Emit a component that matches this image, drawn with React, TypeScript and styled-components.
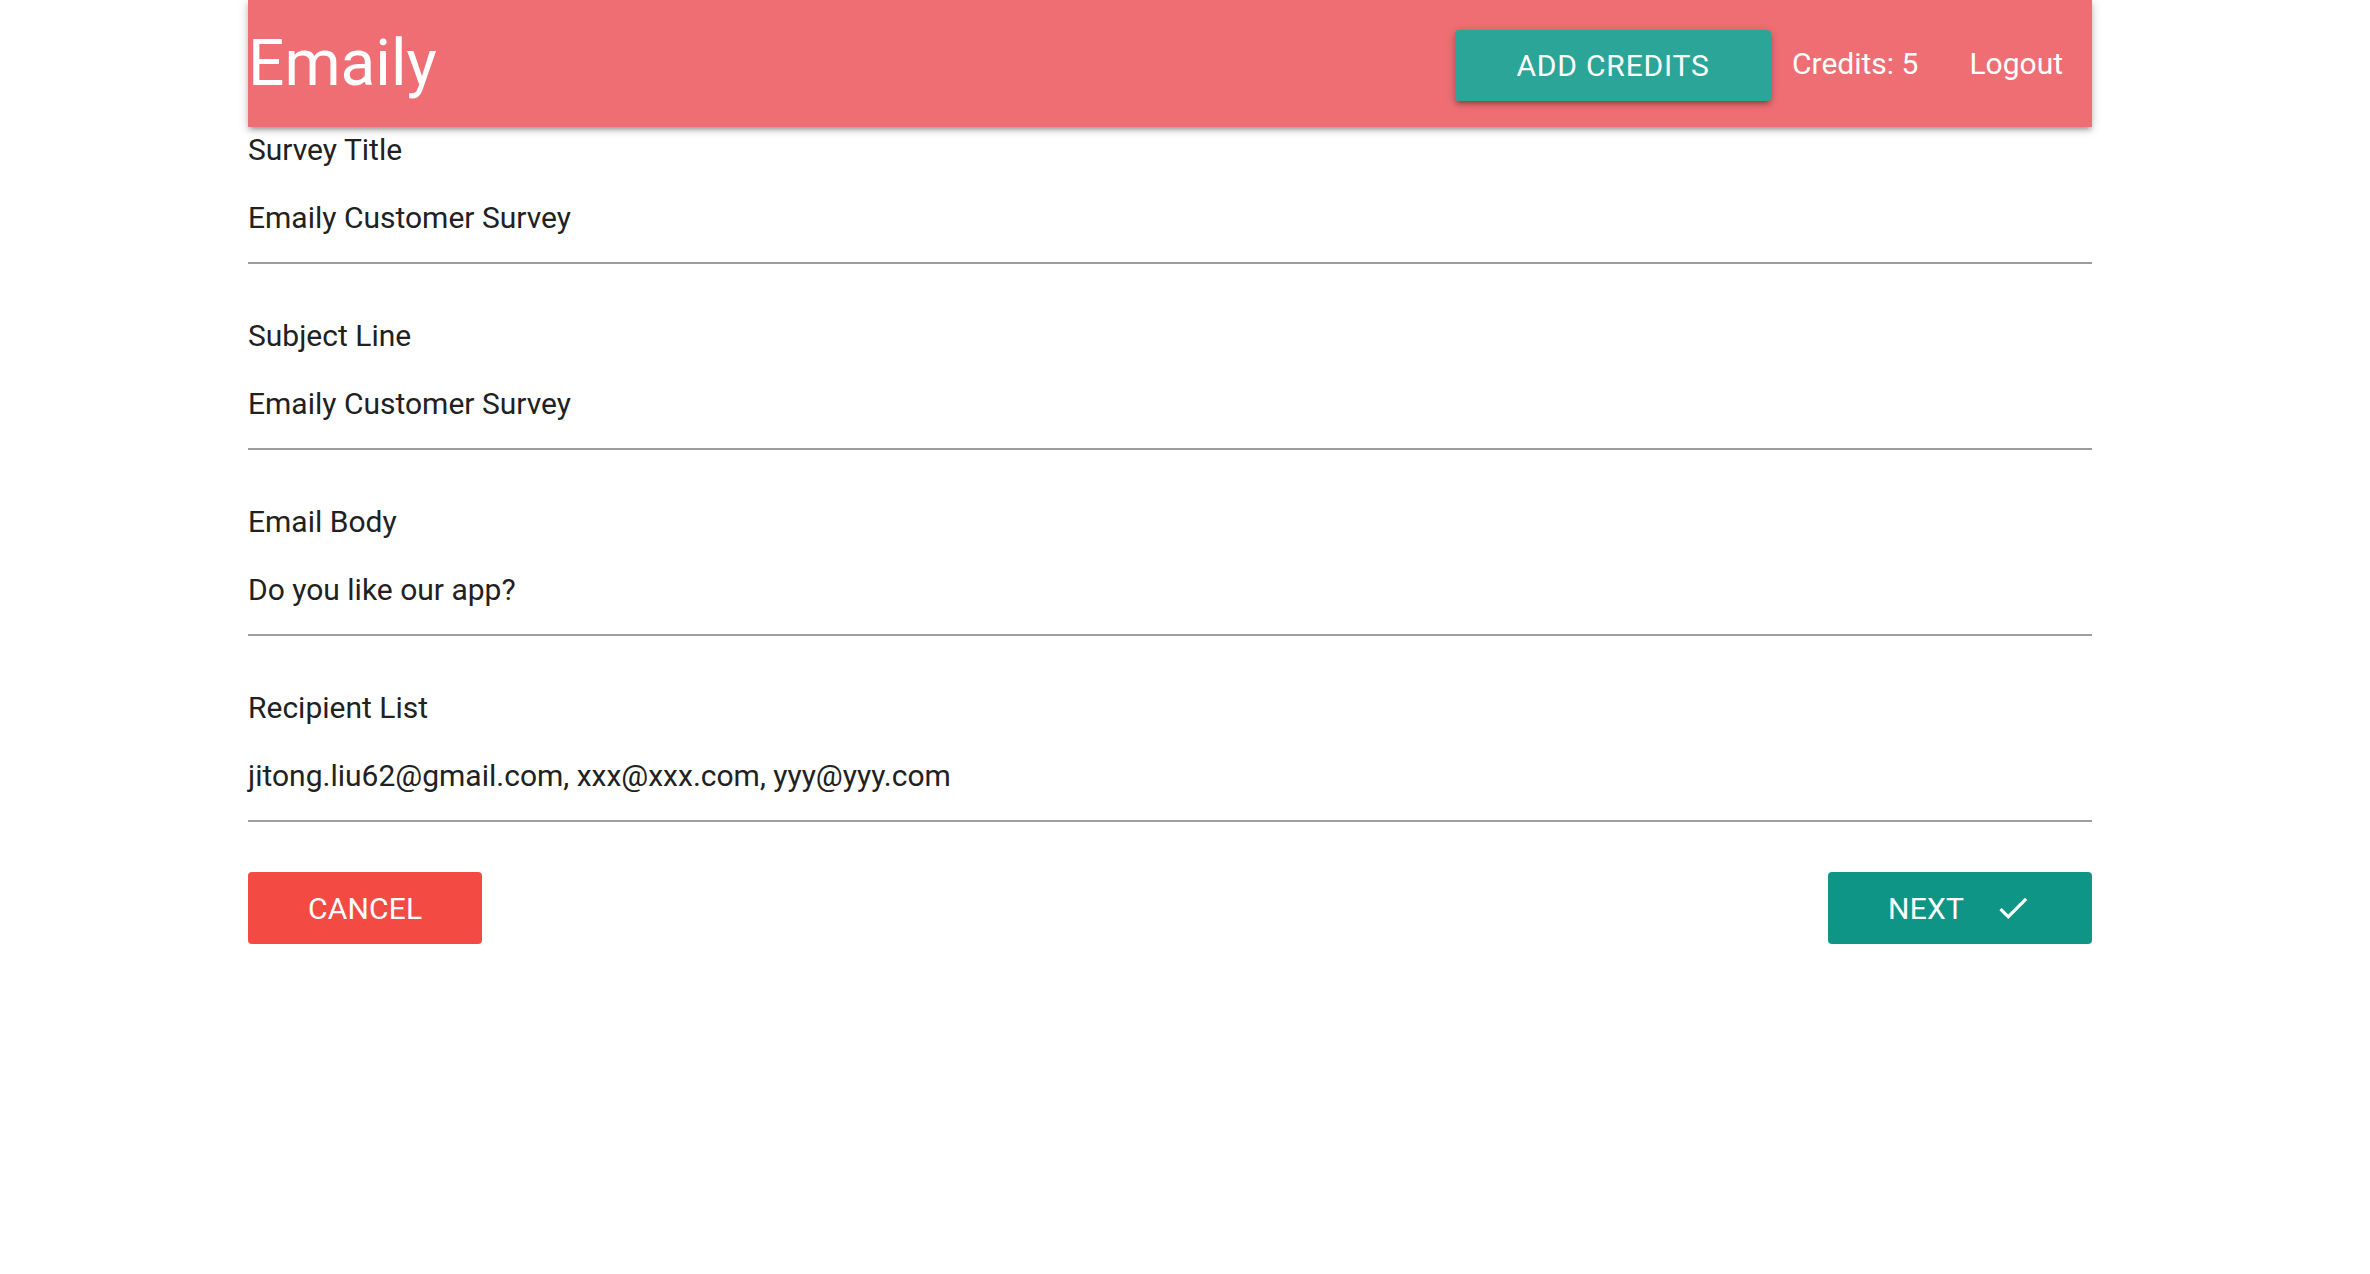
import React from "react";
import styled, { createGlobalStyle } from "styled-components";

const GlobalStyle = createGlobalStyle`
  html, body {
    margin: 0;
    padding: 0;
    background: #ffffff;
  }
  body {
    font-family: Roboto, "Noto Sans", "Liberation Sans", sans-serif;
    color: rgba(0, 0, 0, 0.87);
  }
  * {
    box-sizing: border-box;
  }
`;

const Viewport = styled.div`
  padding-right: 30px;
`;

const Container = styled.div`
  width: 1844px;
  margin: 0 auto;
`;

const Nav = styled.nav`
  height: 127px;
  background: #ee6e73;
  display: flex;
  align-items: center;
  justify-content: space-between;
  box-shadow: 0 4px 4px 0 rgba(0, 0, 0, 0.14), 0 6px 2px -4px rgba(0, 0, 0, 0.12),
    0 2px 10px 0 rgba(0, 0, 0, 0.2);
  position: relative;
  z-index: 1;
`;

const Logo = styled.a`
  font-size: 64px;
  line-height: 127px;
  color: #ffffff;
  text-decoration: none;
`;

const Menu = styled.ul`
  list-style: none;
  margin: 0;
  padding: 0;
  height: 100%;
  display: flex;
  align-items: center;
`;

const MenuItem = styled.li<{ $pl?: number; $pr?: number }>`
  font-size: 30px;
  line-height: 127px;
  color: #ffffff;
  padding: 0 ${(p) => p.$pr ?? 0}px 0 ${(p) => p.$pl ?? 0}px;
  display: flex;
  align-items: center;
`;

const Button = styled.button<{ $bg: string; $raised?: boolean }>`
  height: 72px;
  padding: 0 60px;
  border: none;
  border-radius: 4px;
  background: ${(p) => p.$bg};
  color: #ffffff;
  font-family: Roboto, "Noto Sans", "Liberation Sans", sans-serif;
  font-size: 30px;
  letter-spacing: 0.2px;
  text-transform: uppercase;
  display: inline-flex;
  align-items: center;
  cursor: pointer;
  box-shadow: ${(p) =>
    p.$raised
      ? "0 4px 4px 0 rgba(0,0,0,0.14), 0 6px 2px -4px rgba(0,0,0,0.12), 0 2px 10px 0 rgba(0,0,0,0.2)"
      : "none"};
`;

const NavButton = styled(Button)`
  height: 71px;
  width: 316px;
  justify-content: center;
  padding: 0;
  margin-top: 4px;
  letter-spacing: 0.8px;
`;

const Form = styled.form`
  display: flex;
  flex-direction: column;
`;

const Field = styled.div`
  display: flex;
  flex-direction: column;
  margin-bottom: 49px;
`;

const Label = styled.label`
  font-size: 30px;
  line-height: 46px;
  color: #212121;
`;

const Value = styled.div`
  height: 91px;
  border-bottom: 2px solid #9e9e9e;
  font-size: 30px;
  color: #212121;
  display: flex;
  align-items: center;
`;

const Actions = styled.div`
  display: flex;
  justify-content: space-between;
  align-items: center;
  margin-top: 1px;
`;

const CheckIcon = styled.svg`
  width: 38px;
  height: 38px;
  margin-left: 30px;
  fill: #ffffff;
`;

const fields = [
  { label: "Survey Title", value: "Emaily Customer Survey" },
  { label: "Subject Line", value: "Emaily Customer Survey" },
  { label: "Email Body", value: "Do you like our app?" },
  { label: "Recipient List", value: "jitong.liu62@gmail.com, xxx@xxx.com, yyy@yyy.com" },
];

export default function App() {
  return (
    <Viewport>
      <GlobalStyle />
      <Container>
        <Nav>
          <Logo href="#">Emaily</Logo>
          <Menu>
            <li>
              <NavButton $bg="#2ba597" $raised type="button">
                Add Credits
              </NavButton>
            </li>
            <MenuItem $pl={21} $pr={21}>Credits: 5</MenuItem>
            <MenuItem $pl={30} $pr={29}>Logout</MenuItem>
          </Menu>
        </Nav>
        <Form onSubmit={(e) => e.preventDefault()}>
          {fields.map((f) => (
            <Field key={f.label}>
              <Label>{f.label}</Label>
              <Value>{f.value}</Value>
            </Field>
          ))}
          <Actions>
            <Button $bg="#f34a43" type="button">
              Cancel
            </Button>
            <Button $bg="#0f9585" type="submit">
              Next
              <CheckIcon viewBox="0 0 24 24" aria-hidden="true">
                <path d="M9 16.17L4.83 12l-1.42 1.41L9 19 21 7l-1.41-1.41z" />
              </CheckIcon>
            </Button>
          </Actions>
        </Form>
      </Container>
    </Viewport>
  );
}
